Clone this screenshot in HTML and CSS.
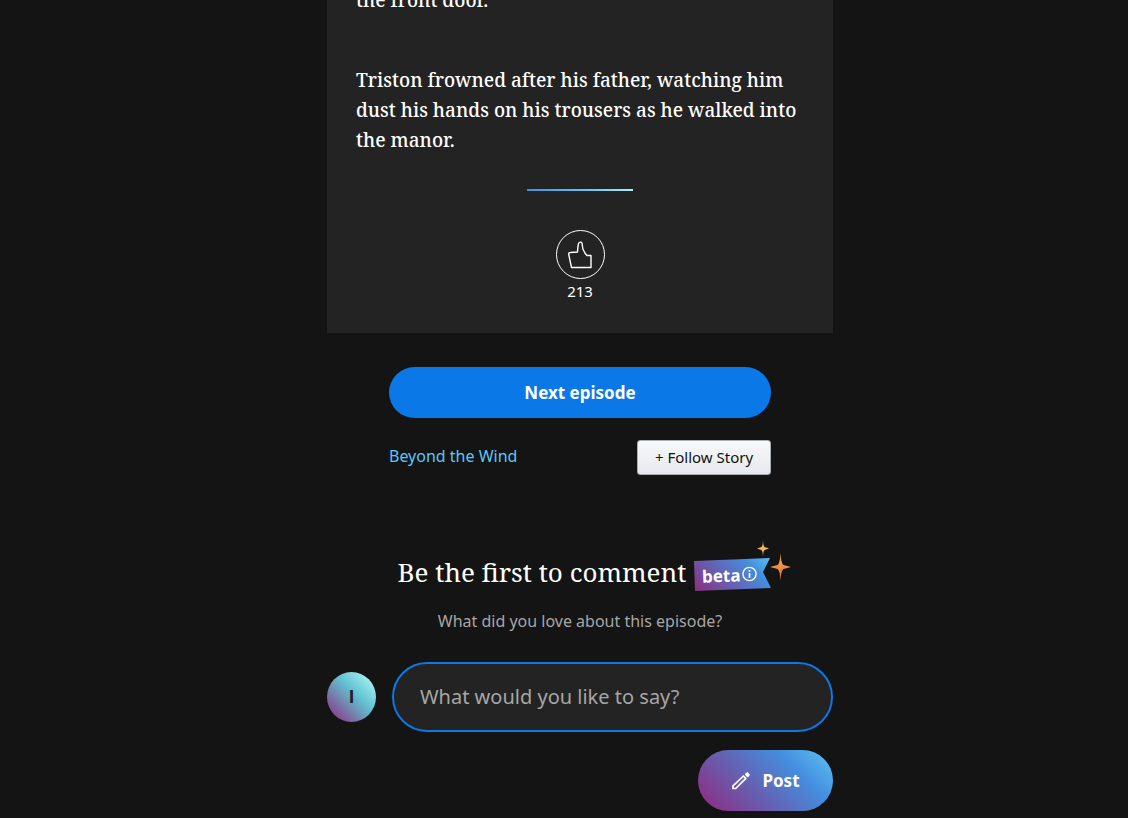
FILE: index.html
```html
<!DOCTYPE html>
<html lang="en">
<head>
    <meta charset="UTF-8">
    <meta name="viewport" content="width=device-width, initial-scale=1.0">
    <title>Beyond the Wind</title>
    <link rel="stylesheet" href="styles.css">
</head>
<body>
    <main class="page">
        <article class="episode">
            <p>the front door.</p>
            <p>Triston frowned after his father, watching him dust his hands on his trousers as he walked into the manor.</p>
            <div class="divider"></div>
            <div class="likes">
                <button class="like-button" type="button" aria-label="Like this episode">
                    <svg width="26" height="28" viewBox="0 0 26 28" fill="none" stroke="#fff" stroke-width="1.4" stroke-linejoin="round">
                        <path d="M4.5 26.5 1.7 13.3Q1.5 11.5 3.3 11.5L10.5 11Q10.8 5.5 11.4 2.8Q12.3 .8 14 1.2Q15 1.5 15.2 3Q15 8 18 12.2L20 14.5H24V26.5Z"/>
                    </svg>
                </button>
                <span class="like-count">213</span>
            </div>
        </article>

        <section class="episode-nav">
            <button class="next-button" type="button">Next episode</button>
            <div class="story-row">
                <a class="story-link" href="#">Beyond the Wind</a>
                <button class="follow-button" type="button">+ Follow Story</button>
            </div>
        </section>

        <section class="comments">
            <div class="comments-header">
                <h2>Be the first to comment</h2>
                <div class="beta">
                    <svg class="beta-art" width="98" height="54" viewBox="0 0 98 54">
                        <defs>
                            <linearGradient id="flag" gradientUnits="userSpaceOnUse" x1="14" y1="62" x2="68" y2="6">
                                <stop offset="0" stop-color="#8b2f82"/>
                                <stop offset=".72" stop-color="#438fdf"/>
                                <stop offset="1" stop-color="#5fc4f3"/>
                            </linearGradient>
                            <linearGradient id="spark" x1="0" y1="0" x2="0" y2="1">
                                <stop offset="0" stop-color="#f6b45b"/>
                                <stop offset="1" stop-color="#e5662f"/>
                            </linearGradient>
                        </defs>
                        <path d="M0 21 76 18 69 32 77 48 1 51Z" fill="url(#flag)"/>
                        <path d="M69 0Q69.2 6.5 70.7 7L75 8.5L70.7 10Q69.2 10.500 69 17Q68.800 10.500 67.300 10L63 8.500L67.300 7Q68.800 6.500 69 0Z" fill="#f0b861"/>
                        <path d="M86.500 13Q87 23.500 89.500 25L97 27L89.500 29Q87 30.500 86.500 41Q86 30.500 83.500 29L76 27L83.500 25Q86 23.500 86.500 13Z" fill="url(#spark)"/>
                        <circle cx="55.500" cy="34" r="6.600" fill="none" stroke="#fff" stroke-width="1.400"/>
                        <path d="M55.500 33V38M55.500 30V31.700" stroke="#fff" stroke-width="1.700"/>
                    </svg>
                    <span class="beta-label">beta</span>
                </div>
            </div>
            <p class="comments-prompt">What did you love about this episode?</p>
            <form class="comment-form">
                <div class="comment-row">
                    <span class="avatar">I</span>
                    <input class="comment-input" type="text" placeholder="What would you like to say?" aria-label="Comment">
                </div>
                <button class="post-button" type="button">
                    <svg width="20" height="20" viewBox="0 0 20 20" fill="none" stroke="#fff" stroke-width="1.700" stroke-linejoin="round">
                        <path d="M2 17.500V14.800L12.500 5 14.800 7.300 4.700 17.500Z"/>
                        <path d="M14.800 3.300 16.200 2 18 3.900 16.700 5.300Z" fill="#fff"/>
                    </svg>
                    Post
                </button>
            </form>
        </section>
    </main>
</body>
</html>
```
FILE: styles.css
```css
* {
    box-sizing: border-box;
}
body {
    margin: 0;
    background: #141414;
    color: #fff;
    font-family: "Noto Sans", sans-serif;
    overflow-x: hidden;
}
button,
input {
    font-family: inherit;
}
button {
    cursor: pointer;
}
.page {
    max-width: 506px;
    margin: 0 auto;
    position: relative;
    left: 16px;
}
.episode {
    display: flow-root;
    padding: 0 29px 32px;
    background: #232323;
}
.episode p {
    margin: 0 0 50px;
    font-family: "Noto Serif", "Liberation Serif", serif;
    font-size: 19px;
    font-weight: 500;
    line-height: 30px;
}
.episode p:first-child {
    margin-top: -15px;
}
.divider {
    width: 106px;
    height: 2px;
    margin: -16px auto 39px;
    background: linear-gradient(90deg, #438fdf, #6cc8f5 60%, #a8f0f5);
}
.likes {
    display: flex;
    flex-direction: column;
    align-items: center;
    gap: 2px;
}
.like-button {
    display: flex;
    align-items: center;
    justify-content: center;
    width: 49px;
    height: 49px;
    padding: 0;
    border: 1px solid #fff;
    border-radius: 50%;
    background: none;
}
.like-count {
    font-size: 15px;
    line-height: 20px;
}
.episode-nav {
    max-width: 382px;
    margin: 34px auto 0;
}
.next-button {
    display: block;
    width: 100%;
    height: 51px;
    border: 0;
    border-radius: 26px;
    background: #0a78e6;
    color: #fff;
    font-size: 17px;
    font-weight: 700;
}
.story-row {
    display: flex;
    align-items: flex-start;
    justify-content: space-between;
    margin-top: 22px;
}
.story-link {
    color: #5cc6f7;
    font-size: 16px;
    line-height: 32px;
    text-decoration: none;
}
.follow-button {
    width: 134px;
    height: 35px;
    padding: 0 0 2px;
    border: 1px solid #a8acb3;
    border-radius: 3px;
    background: linear-gradient(#f7f8fa, #e7e9ec);
    color: #111;
    font-size: 15px;
}
.comments {
    margin-top: 65px;
}
.comments-header {
    display: flex;
    align-items: center;
    justify-content: center;
    gap: 8px;
    padding-left: 30px;
}
.comments-header h2 {
    margin: 10px 0 0;
    font-family: "Noto Serif", "Liberation Serif", serif;
    font-size: 26px;
    font-weight: 400;
    line-height: 40px;
}
.beta {
    position: relative;
    height: 54px;
}
.beta-art {
    display: block;
}
.beta-label {
    position: absolute;
    top: 24px;
    left: 8px;
    font-size: 17px;
    font-weight: 700;
    line-height: 24px;
    transform: rotate(-2deg);
}
.comments-prompt {
    margin: 15px 0 29px;
    color: #a6a6a6;
    font-size: 16px;
    line-height: 24px;
    text-align: center;
}
.comment-form {
    display: flex;
    flex-direction: column;
    align-items: flex-end;
    gap: 18px;
    padding-bottom: 7px;
}
.comment-row {
    display: flex;
    align-items: center;
    gap: 16px;
    width: 100%;
}
.avatar {
    flex: none;
    width: 49px;
    height: 50px;
    border-radius: 50%;
    background: linear-gradient(45deg, #8b2f82 5%, #62c3d1 58%, #a8f0f5 90%);
    color: #232323;
    font-family: Roboto, sans-serif;
    font-size: 19px;
    font-weight: 700;
    line-height: 50px;
    text-align: center;
}
.comment-input {
    flex: 1;
    min-width: 0;
    height: 70px;
    padding: 0 26px 2px;
    border: 2px solid #0a78e6;
    border-radius: 35px;
    outline: 0;
    background: #232323;
    color: #fff;
    font-size: 20px;
}
.comment-input::placeholder {
    color: #a6a6a6;
}
.post-button {
    display: flex;
    align-items: center;
    justify-content: center;
    gap: 11px;
    width: 135px;
    height: 61px;
    border: 0;
    border-radius: 31px;
    background: linear-gradient(45deg, #8b2f82 5%, #438fdf 72%, #5fc4f3);
    color: #fff;
    font-size: 17px;
    font-weight: 700;
}
```
